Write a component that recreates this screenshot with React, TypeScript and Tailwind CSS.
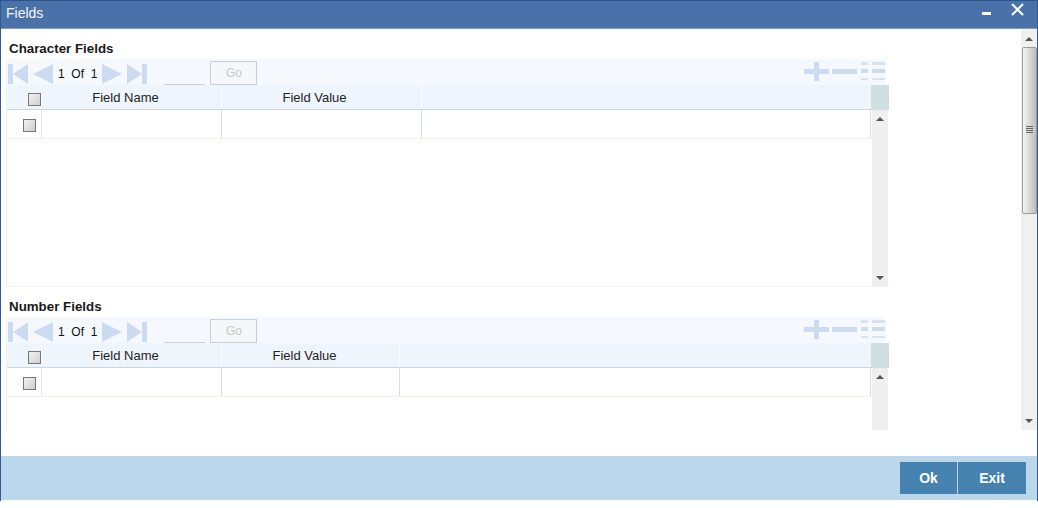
import React from 'react';

// Pager arrows, drawn in the pale blue of a disabled toolbar
const PagerIcons = ({ side }: { side: 'left' | 'right' }) =>
  side === 'left' ? (
    <svg width="47" height="21" viewBox="0 0 47 21" className="shrink-0 mt-[2px]">
      <rect x="0" y="0" width="5" height="20" fill="#cbdcf2" />
      <path d="M5 10 L20 0 V20 Z" fill="#cbdcf2" />
      <path d="M25 10 L45 0 V20 Z" fill="#cbdcf2" />
    </svg>
  ) : (
    <svg width="46" height="21" viewBox="0 0 46 21" className="shrink-0 mt-[2px]">
      <path d="M0 0 L20 10 L0 20 Z" fill="#cbdcf2" />
      <path d="M25 0 L40 10 L25 20 Z" fill="#cbdcf2" />
      <rect x="40" y="0" width="5" height="20" fill="#cbdcf2" />
    </svg>
  );

const ActionIcons = () => (
  <svg width="82" height="22" viewBox="0 0 82 22" className="shrink-0">
    <rect x="0" y="7" width="25" height="5" fill="#cbdcf2" />
    <rect x="10" y="0" width="5" height="19" fill="#cbdcf2" />
    <rect x="28" y="7" width="25" height="5" fill="#cbdcf2" />
    <rect x="57" y="0" width="7" height="3" fill="#d6e3f5" />
    <rect x="57" y="7" width="7" height="4" fill="#cbdcf2" />
    <rect x="57" y="16" width="7" height="2" fill="#d6e3f5" />
    <rect x="68" y="0" width="13" height="3" fill="#d6e3f5" />
    <rect x="68" y="7" width="13" height="4" fill="#cbdcf2" />
    <rect x="68" y="16" width="13" height="2" fill="#d6e3f5" />
  </svg>
);

const CheckBox = () => (
  <div className="w-[13px] h-[13px] border border-[#777777] bg-gradient-to-br from-[#f2f2f2] to-[#cfcfcf]" />
);

const ArrowUp = () => <div className="w-0 h-0 border-x-[4px] border-x-transparent border-b-[4px] border-b-[#555555]" />;
const ArrowDown = () => <div className="w-0 h-0 border-x-[4px] border-x-transparent border-t-[4px] border-t-[#555555]" />;

const FieldGrid = ({
  title,
  valueWidth,
  valueInset,
  bodyHeight,
  last,
}: {
  title: string;
  valueWidth: string;
  valueInset: string;
  bodyHeight: string;
  last?: boolean;
}) => (
  <section>
    <h2 className="pl-[9px] h-[20px] pt-[1px] text-[13.33px] leading-[17px] font-bold text-[#1a1a1a]">{title}</h2>

    {/* toolbar */}
    <div className="ml-[5px] w-[881px] h-[26px] bg-[#f5f9fe] flex items-start pt-[3px] pl-[3px]">
      <PagerIcons side="left" />
      <span className="ml-[3px] w-[44px] mt-[3px] text-[12px] leading-[18px] text-[#111111] whitespace-pre">1  Of  1</span>
      <PagerIcons side="right" />
      <div className="ml-[16px] w-[41px] h-[23px] border-b border-[#cfcfcf]" />
      <button className="ml-[5px] -mt-[1px] pl-px w-[47px] h-[24px] border border-[#c9cfd6] bg-[#f5f7fa] text-[12px] text-[#c8c8c8]">
        Go
      </button>
      <div className="ml-auto">
        <ActionIcons />
      </div>
    </div>

    <div className="ml-[6px] flex w-[883px]">
      <div className="w-[865px] shrink-0 border-l border-[#eef2f7]">
        {/* header */}
        <div className="h-[25px] bg-[#eff5fd] border-b border-[#c9d6e6] flex text-[13px] leading-[25px] text-[#222222]">
          <div className="w-[35px] shrink-0 flex justify-end items-start pt-[8px] border-r border-[#fafcff]">
            <CheckBox />
          </div>
          <div className="w-[180px] shrink-0 text-center border-r border-[#fafcff] pr-[12px]">Field Name</div>
          <div className={`${valueWidth} ${valueInset} shrink-0 text-center border-r border-[#fafcff]`}>Field Value</div>
        </div>
        {/* row */}
        <div className="h-[29px] flex border-b border-[#f7efe8] border-r-[#d6deea] border-r">
          <div className="w-[35px] shrink-0 flex justify-end items-start pt-[9px] pr-[5px] border-r border-[#dfe5ee]">
            <CheckBox />
          </div>
          <div className="w-[180px] shrink-0 border-r border-[#d6deea]" />
          <div className={`${valueWidth} shrink-0 border-r border-[#d6deea]`} />
        </div>
        <div className={bodyHeight} />
      </div>

      {/* grid scrollbar */}
      <div className="w-[18px] shrink-0 flex flex-col">
        <div className="h-[25px] bg-[#cfdfdf]" />
        <div className="ml-[1px] w-[16px] flex-1 bg-[#efefef] flex flex-col items-center justify-between pt-[7px] pb-[6px]">
          <ArrowUp />
          {!last && <ArrowDown />}
        </div>
      </div>
    </div>
    {!last && <div className="ml-[6px] w-[883px] h-px bg-[#eef1f5]" />}
  </section>
);

export default function App() {
  return (
    <div className="w-[1038px] h-[508px] bg-white font-['Liberation_Sans',Arial,sans-serif] overflow-hidden">
      <div className="h-[501px] border-x border-[#2f5a93] flex flex-col">
        {/* title bar */}
        <header className="h-[29px] shrink-0 bg-[#4a72a8] border-t border-t-[#2c5590] border-b border-b-[#7f9fb8] flex items-start text-white">
          <span className="ml-[5px] mt-[3px] text-[14px] leading-[18px] text-[#f2f5fa]">Fields</span>
          <div className="ml-auto flex items-start">
            <div className="mt-[11px] mr-[19px] w-[9px] h-[3px] bg-white" />
            <svg width="14" height="14" viewBox="0 0 14 14" className="mt-[1px] mr-[13px]">
              <path d="M2 2 L13 13 M13 2 L2 13" stroke="#ffffff" strokeWidth="2" />
            </svg>
          </div>
        </header>

        <div className="h-[401px] shrink-0 flex">
          <div className="flex-1 overflow-hidden pt-[10px] -ml-px">
            <FieldGrid title="Character Fields" valueWidth="w-[200px]" valueInset="pr-[14px]" bodyHeight="h-[147px]" />
            <div className="h-[10px]" />
            <FieldGrid title="Number Fields" valueWidth="w-[178px]" valueInset="pr-[12px]" bodyHeight="h-[33px]" last />
          </div>

          {/* page scrollbar */}
          <div className="w-[16px] shrink-0 bg-[#f0f0f0] flex flex-col items-center">
            <div className="h-[18px] flex items-center justify-center pt-[1px]">
              <ArrowUp />
            </div>
            <div className="w-[15px] h-[167px] border border-[#9a9a9a] rounded-[2px] bg-gradient-to-r from-[#f5f5f5] to-[#bdbdbd] flex flex-col items-center justify-center gap-[1px] pb-[2px]">
              <div className="w-[7px] h-px bg-[#666666]" />
              <div className="w-[7px] h-px bg-[#666666]" />
              <div className="w-[7px] h-px bg-[#666666]" />
              <div className="w-[7px] h-px bg-[#666666]" />
            </div>
            <div className="mt-auto h-[18px] flex items-center justify-center">
              <ArrowDown />
            </div>
          </div>
        </div>

        <div className="h-[26px] shrink-0 bg-white" />

        {/* footer */}
        <footer className="h-[44px] shrink-0 bg-[#bad7ec] flex items-start justify-end pt-[6px] pr-[11px]">
          <button className="w-[58px] h-[32px] bg-[#4682b0] text-white font-bold text-[14px] border-r border-[#bad7ec]">
            Ok
          </button>
          <button className="w-[68px] h-[32px] bg-[#4682b0] text-white font-bold text-[14px]">Exit</button>
        </footer>
      </div>
    </div>
  );
}
